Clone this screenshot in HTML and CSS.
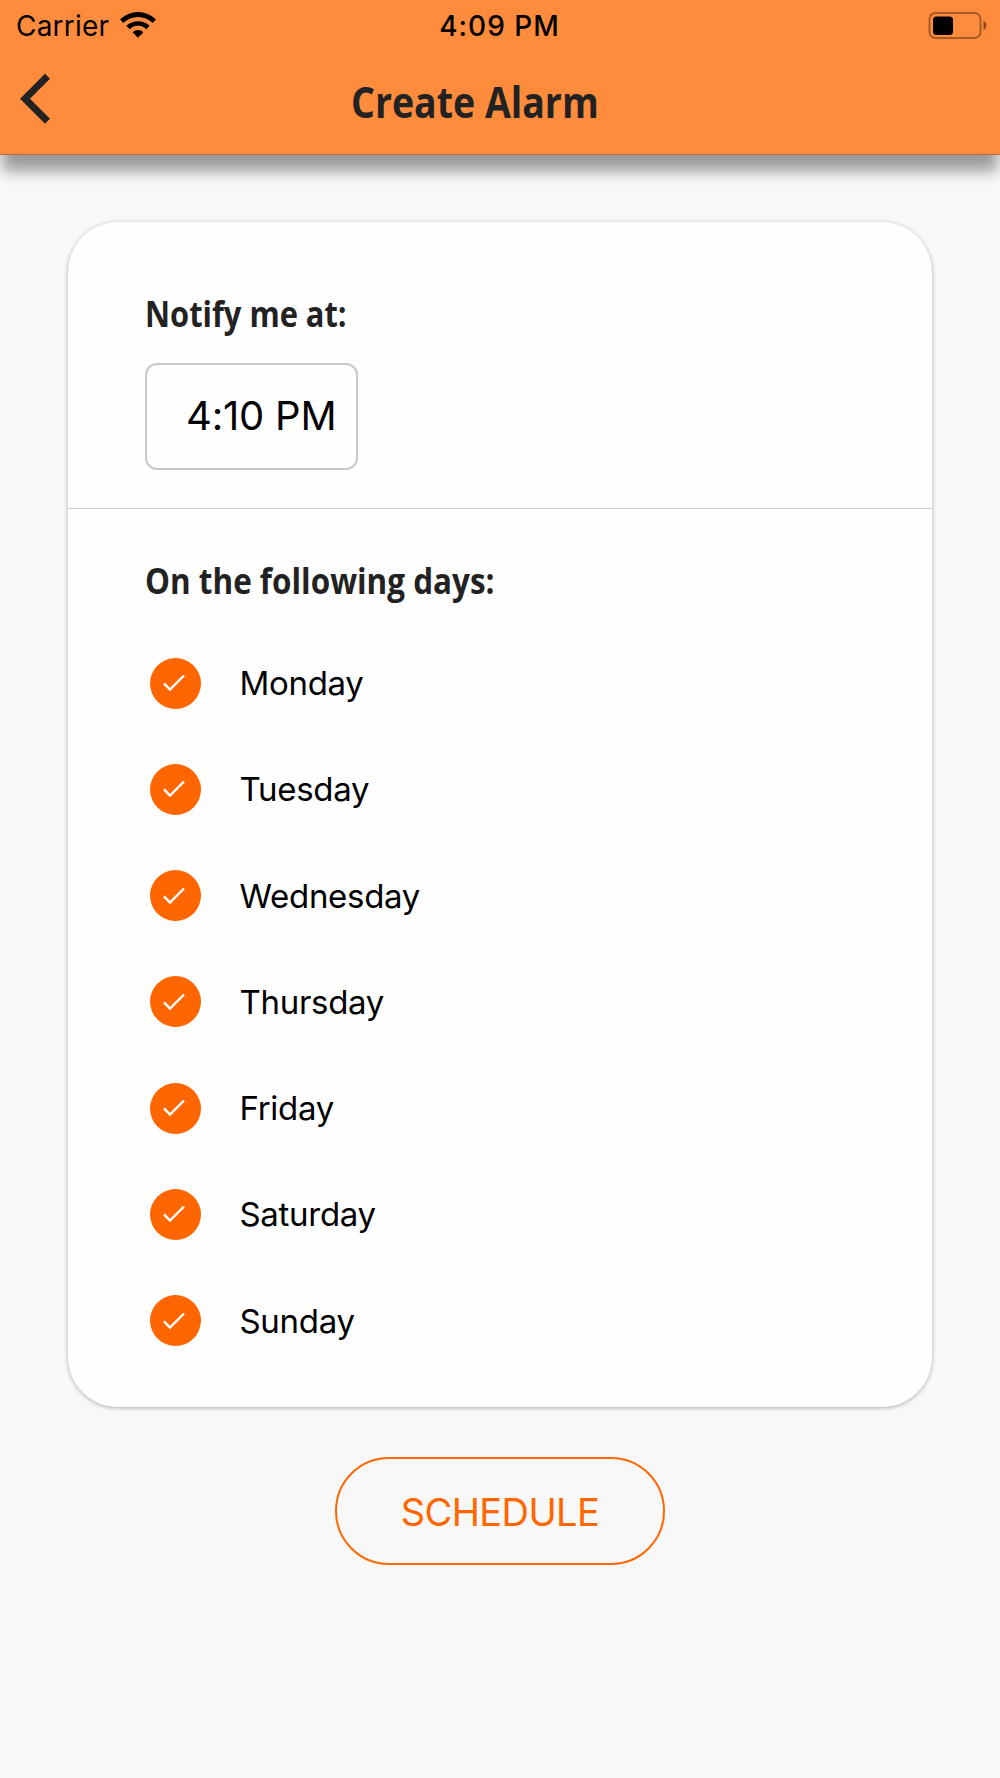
FILE: index.html
```
<!DOCTYPE html>
<html lang="en">
<head>
    <meta charset="UTF-8">
    <meta name="viewport" content="width=device-width, initial-scale=1.0">
    <title>Create Alarm</title>
    <link rel="stylesheet" href="styles.css">
</head>
<body>
    <header class="header">
        <div class="status-bar">
            <div class="status-left">
                <span class="carrier">Carrier</span>
                <svg class="wifi" width="36" height="27" viewBox="0 0 36 27">
                    <path d="M0 8.3 A26 26 0 0 1 36 8.3 L32.7 12 A21 21 0 0 0 3.3 12 Z"/>
                    <path d="M6.3 14.8 A17 17 0 0 1 29.7 14.8 L26.3 18.2 A12 12 0 0 0 9.7 18.2 Z"/>
                    <path d="M12.6 21.2 A8 8 0 0 1 23.4 21.2 L18 26.7 Z"/>
                </svg>
            </div>
            <div class="clock">4:09 PM</div>
            <div class="status-right">
                <svg class="battery" width="59" height="28" viewBox="0 0 59 28">
                    <rect class="battery-shell" x="1.5" y="1" width="51" height="25" rx="6"/>
                    <rect x="5" y="4.5" width="20" height="18.5" rx="3.5"/>
                    <path class="battery-cap" d="M55.5 8.5 Q58.5 10.5 58.5 13.5 Q58.5 16.5 55.5 18.5 Z"/>
                </svg>
            </div>
        </div>
        <div class="nav-bar">
            <svg class="back" width="32" height="52" viewBox="0 0 32 52">
                <path d="M27.5 3.3 L5 25.8 L27.5 48.3"/>
            </svg>
            <h1 class="title">Create Alarm</h1>
        </div>
    </header>

    <main class="content">
        <div class="card">
            <section class="card-section time-section">
                <h2 class="label">Notify me at:</h2>
                <div class="time-box"><span class="time-value">4:10 PM</span></div>
            </section>
            <section class="card-section days-section">
                <h2 class="label label-days">On the following days:</h2>
                <ul class="days">
                    <li class="day"><span class="check"><svg width="24" height="20" viewBox="0 0 24 20"><path d="M2 10.3 L8 16.6 L22 2.5"/></svg></span><span class="day-name">Monday</span></li>
                    <li class="day"><span class="check"><svg width="24" height="20" viewBox="0 0 24 20"><path d="M2 10.3 L8 16.6 L22 2.5"/></svg></span><span class="day-name">Tuesday</span></li>
                    <li class="day"><span class="check"><svg width="24" height="20" viewBox="0 0 24 20"><path d="M2 10.3 L8 16.6 L22 2.5"/></svg></span><span class="day-name">Wednesday</span></li>
                    <li class="day"><span class="check"><svg width="24" height="20" viewBox="0 0 24 20"><path d="M2 10.3 L8 16.6 L22 2.5"/></svg></span><span class="day-name">Thursday</span></li>
                    <li class="day"><span class="check"><svg width="24" height="20" viewBox="0 0 24 20"><path d="M2 10.3 L8 16.6 L22 2.5"/></svg></span><span class="day-name">Friday</span></li>
                    <li class="day"><span class="check"><svg width="24" height="20" viewBox="0 0 24 20"><path d="M2 10.3 L8 16.6 L22 2.5"/></svg></span><span class="day-name">Saturday</span></li>
                    <li class="day"><span class="check"><svg width="24" height="20" viewBox="0 0 24 20"><path d="M2 10.3 L8 16.6 L22 2.5"/></svg></span><span class="day-name">Sunday</span></li>
                </ul>
            </section>
        </div>
        <button class="btn-schedule">SCHEDULE</button>
    </main>
</body>
</html>
```
FILE: styles.css
```
* {
    box-sizing: border-box;
}
body {
    font-family: Inter, "Liberation Sans", sans-serif;
    margin: 0;
    min-height: 1778px;
    background-color: #f8f8f8;
    color: #000;
}
.header {
    height: 155px;
    background-color: #ff8c3c;
    border-bottom: 1px solid #b9703d;
    box-shadow: 0 18px 14px -2px rgba(0, 0, 0, 0.38);
}
.status-bar {
    display: grid;
    grid-template-columns: 1fr auto 1fr;
    align-items: center;
    height: 50px;
    padding: 0 13px 0 16px;
    font-size: 28px;
    line-height: 52px;
}
.status-left {
    display: flex;
    align-items: center;
    gap: 11px;
}
.carrier {
    letter-spacing: 0.2px;
}
.wifi {
    margin-top: -4px;
}
.clock {
    margin-right: 4px;
    font-weight: 550;
    letter-spacing: 1px;
}
.status-right {
    display: flex;
    justify-content: flex-end;
}
.battery-shell {
    fill: none;
    stroke: #a65b27;
    stroke-width: 2;
}
.battery-cap {
    fill: #8c4d21;
}
.nav-bar {
    display: flex;
    align-items: center;
    height: 104px;
    padding-left: 20px;
}
.back {
    margin-top: -6px;
}
.back path {
    fill: none;
    stroke: #222;
    stroke-width: 7;
}
.title {
    margin: -1px 0 0 299px;
    font-family: "Open Sans", "Noto Sans", sans-serif;
    font-size: 43.5px;
    font-weight: 700;
    line-height: 61px;
    color: #222;
    transform: scaleX(0.862);
    transform-origin: left;
}
.content {
    display: flex;
    flex-direction: column;
    align-items: center;
    padding-top: 67px;
}
.card {
    width: 864px;
    height: 1185px;
    background-color: #fefefe;
    border-radius: 50px;
    box-shadow: 0 1px 4px rgba(0, 0, 0, 0.3);
}
.card-section {
    padding-left: 77px;
}
.time-section {
    height: 287px;
    padding-top: 67px;
    border-bottom: 1px solid #ccc;
}
.label {
    margin: 0;
    width: max-content;
    font-family: "Open Sans", "Noto Sans", sans-serif;
    font-size: 36px;
    font-weight: 700;
    line-height: 50px;
    color: #222;
    transform: scaleX(0.856);
    transform-origin: left;
}
.label-days {
    transform: scaleX(0.873);
}
.time-box {
    width: 213px;
    height: 107px;
    margin-top: 24px;
    padding-left: 39px;
    border: 2px solid #c8c8c8;
    border-radius: 12px;
    font-size: 40px;
    line-height: 101px;
    letter-spacing: -0.2px;
}
.days-section {
    padding-top: 47px;
}
.days {
    display: flex;
    flex-direction: column;
    margin: 0;
    padding: 24px 0 0 5px;
    list-style: none;
}
.day {
    display: flex;
    align-items: center;
    gap: 38.5px;
    height: 106.25px;
    font-size: 33px;
    letter-spacing: -0.3px;
}
.check {
    display: flex;
    align-items: center;
    justify-content: center;
    width: 51px;
    height: 51px;
    padding-right: 3px;
    border-radius: 50%;
    background-color: #ff6600;
}
.check path {
    fill: none;
    stroke: #fff;
    stroke-width: 2.4;
}
.btn-schedule {
    width: 330px;
    height: 108px;
    margin-top: 50px;
    padding: 2px 0 0;
    border: 2px solid #ff6600;
    border-radius: 54px;
    background: none;
    font-family: inherit;
    font-size: 38px;
    letter-spacing: -0.6px;
    color: #ff6600;
}
```
